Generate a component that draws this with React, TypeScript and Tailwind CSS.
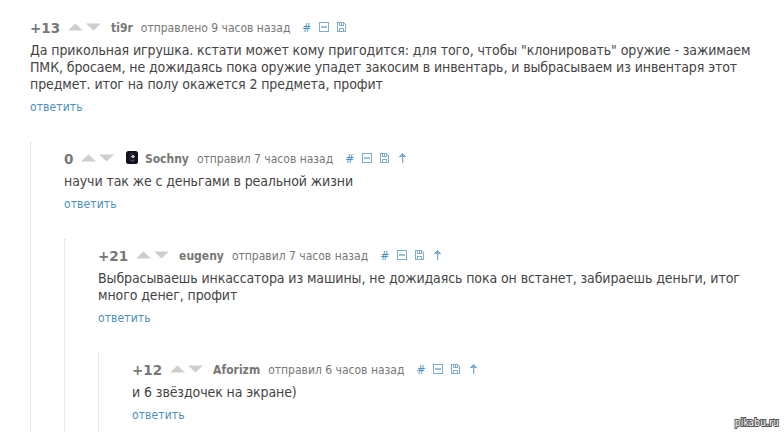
import type { ReactNode } from 'react';

interface Comment {
  rating: string;
  author: string;
  avatar?: boolean;
  when: string;
  hasParent: boolean;
  lines: string[];
  replies?: Comment[];
}

const thread: Comment = {
  rating: '+13',
  author: 'ti9r',
  when: 'отправлено 9 часов назад',
  hasParent: false,
  lines: [
    'Да прикольная игрушка. кстати может кому пригодится: для того, чтобы "клонировать" оружие - зажимаем',
    'ПМК, бросаем, не дожидаясь пока оружие упадет закосим в инвентарь, и выбрасываем из инвентаря этот',
    'предмет. итог на полу окажется 2 предмета, профит',
  ],
  replies: [
    {
      rating: '0',
      author: 'Sochny',
      avatar: true,
      when: 'отправил 7 часов назад',
      hasParent: true,
      lines: ['научи так же с деньгами в реальной жизни'],
      replies: [
        {
          rating: '+21',
          author: 'eugeny',
          when: 'отправил 7 часов назад',
          hasParent: true,
          lines: [
            'Выбрасываешь инкассатора из машины, не дожидаясь пока он встанет, забираешь деньги, итог',
            'много денег, профит',
          ],
          replies: [
            {
              rating: '+12',
              author: 'Aforizm',
              when: 'отправил 6 часов назад',
              hasParent: true,
              lines: ['и 6 звёздочек на экране)'],
            },
          ],
        },
      ],
    },
  ],
};

function VoteArrows() {
  return (
    <svg width="34" height="8" viewBox="0 0 34 8" className="shrink-0 mb-0.5">
      <path d="M0 7.5 7.5 0.5 15 7.5Z" fill="#cecece" />
      <path d="M18 0.5H33L25.5 7.5Z" fill="#cecece" />
    </svg>
  );
}

function Avatar() {
  return (
    <svg width="12" height="13" viewBox="0 0 12 13" className="shrink-0 ml-[1.5px] mr-[7px] mb-[3px]">
      <rect width="12" height="13" rx="2.5" fill="#11131c" />
      <path d="M3 3.5 4.5 1.5h3L9 3.5v5L7.5 11h-3L3 8.5Z" fill="#25232d" />
      <rect x="5" y="5" width="4" height="1" fill="#d8d8de" />
      <rect x="6" y="4" width="2" height="3" fill="#b5b4bc" />
      <rect x="5" y="9" width="3" height="1" fill="#55535f" />
    </svg>
  );
}

function Icon({ children, className }: { children: ReactNode; className: string }) {
  return (
    <svg height="10" fill="none" stroke="#7eadcd" className={`shrink-0 ${className}`} shapeRendering="crispEdges">
      {children}
    </svg>
  );
}

function Tools({ hasParent }: { hasParent: boolean }) {
  return (
    <div className="flex items-center text-[#4a8fbf]">
      <span className="w-[17px] text-[12px]">#</span>
      <Icon className="w-[10px] mr-2 mb-0.5">
        <path d="M.5.5h9v9h-9Z" />
        <path d="M2 5h6" strokeWidth="2" opacity=".75" />
      </Icon>
      <Icon className="w-[9px] mr-[10px] mb-0.5">
        <path d="M.5.5h6l2 2v7h-8ZM2.5 1v2.5h4V1M2.5 9V6.5h4V9M4.5 1v2" />
      </Icon>
      {hasParent && (
        <Icon className="w-[7px] mb-0.5">
          <path d="M3.5 0v10" />
          <path d="M2 1.5h3M1 2.5h5M0 3.5h7" />
          <path d="M4.5 3v7" opacity=".3" />
        </Icon>
      )}
    </div>
  );
}

function CommentItem({ comment }: { comment: Comment }) {
  return (
    <div>
      <div className="pt-[7px] pb-[26px]">
        <div className="flex h-5 items-center whitespace-nowrap text-[12px] text-[#777]">
          <span className="mr-2 font-['DejaVu_Sans'] text-[13.5px] font-bold">{comment.rating}</span>
          <VoteArrows />
          <div className="ml-[9px] flex items-center">
            {comment.avatar && <Avatar />}
            <span className="font-bold">{comment.author}</span>
          </div>
          <span className="ml-2 mr-[12px]">{comment.when}</span>
          <Tools hasParent={comment.hasParent} />
        </div>
        <div className="mt-1 whitespace-nowrap text-[14px] leading-[17px] tracking-[-0.1px] text-[#444]">
          {comment.lines.map((line) => (
            <p key={line}>{line}</p>
          ))}
        </div>
        <a className="mt-1.5 block text-[12px] leading-[17px] tracking-[0.1px] text-[#4a8fbf]">ответить</a>
      </div>
      {comment.replies?.map((reply) => (
        <div key={reply.author} className="border-l border-dotted border-[#d4d4d4] pl-[33px]">
          <CommentItem comment={reply} />
        </div>
      ))}
    </div>
  );
}

export default function App() {
  return (
    <div className="relative h-[433px] w-[784px] overflow-hidden bg-white pl-[30px] pt-[11px] font-['DejaVu_Sans_Condensed','DejaVu_Sans',sans-serif]">
      <CommentItem comment={thread} />
      <span className="absolute bottom-[3px] right-[5px] text-[10px] leading-[14px] tracking-[0.2px] text-white [paint-order:stroke] [-webkit-text-stroke:2px_#555]">
        pikabu.ru
      </span>
    </div>
  );
}
